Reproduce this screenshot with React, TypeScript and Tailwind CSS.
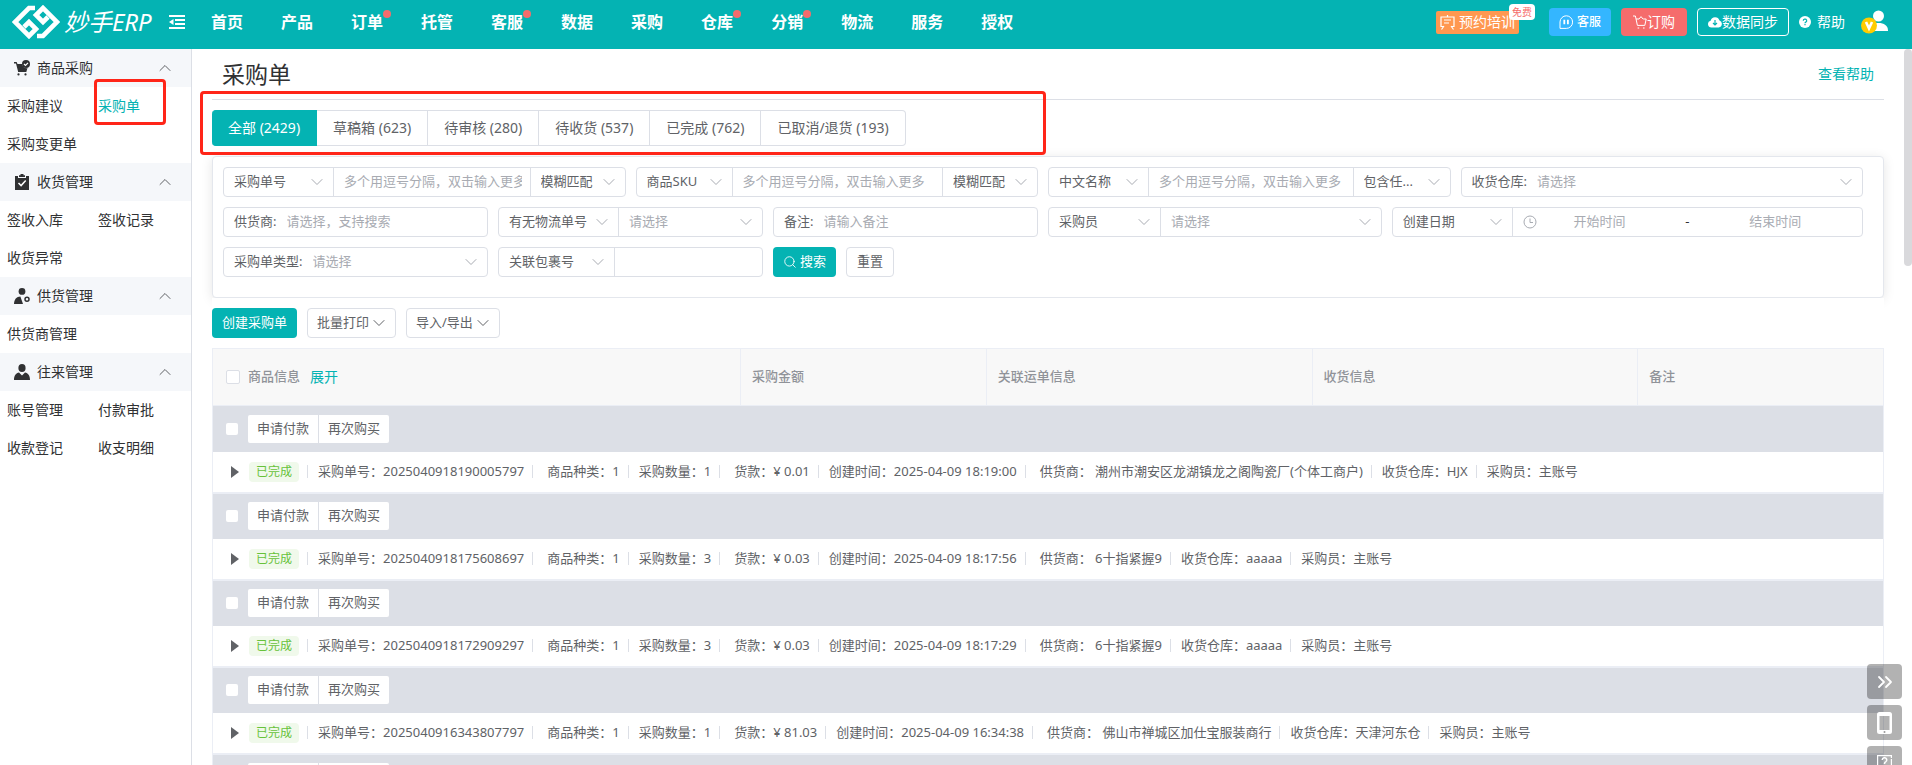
import type { ReactNode } from "react";
import { useState } from "react";
import { ChevronDown, ChevronsRight, ChevronUp, Search } from "lucide-react";
import clsx from "clsx";

type Order = {
  id: string;
  kinds: number;
  quantity: number;
  amount: string;
  createdAt: string;
  supplier: string;
  warehouse: string;
  buyer: string;
};

const navItems = [
  { label: "首页" },
  { label: "产品" },
  { label: "订单", dot: true },
  { label: "托管" },
  { label: "客服", dot: true },
  { label: "数据" },
  { label: "采购" },
  { label: "仓库", dot: true },
  { label: "分销", dot: true },
  { label: "物流" },
  { label: "服务" },
  { label: "授权" },
];

const menuGroups = [
  { title: "商品采购", icon: <CartIcon />, items: ["采购建议", "采购单", "采购变更单"] },
  { title: "收货管理", icon: <ClipboardIcon />, items: ["签收入库", "签收记录", "收货异常"] },
  { title: "供货管理", icon: <SupplierIcon />, items: ["供货商管理"] },
  { title: "往来管理", icon: <PersonIcon />, items: ["账号管理", "付款审批", "收款登记", "收支明细"] },
];

const tabs = [
  { label: "全部", count: 2429 },
  { label: "草稿箱", count: 623 },
  { label: "待审核", count: 280 },
  { label: "待收货", count: 537 },
  { label: "已完成", count: 762 },
  { label: "已取消/退货", count: 193 },
];

const orders: Order[] = [
  {
    id: "2025040918190005797",
    kinds: 1,
    quantity: 1,
    amount: "0.01",
    createdAt: "2025-04-09 18:19:00",
    supplier: "潮州市潮安区龙湖镇龙之阁陶瓷厂(个体工商户)",
    warehouse: "HJX",
    buyer: "主账号",
  },
  {
    id: "2025040918175608697",
    kinds: 1,
    quantity: 3,
    amount: "0.03",
    createdAt: "2025-04-09 18:17:56",
    supplier: "6十指紧握9",
    warehouse: "aaaaa",
    buyer: "主账号",
  },
  {
    id: "2025040918172909297",
    kinds: 1,
    quantity: 3,
    amount: "0.03",
    createdAt: "2025-04-09 18:17:29",
    supplier: "6十指紧握9",
    warehouse: "aaaaa",
    buyer: "主账号",
  },
  {
    id: "2025040916343807797",
    kinds: 1,
    quantity: 1,
    amount: "81.03",
    createdAt: "2025-04-09 16:34:38",
    supplier: "佛山市禅城区加仕宝服装商行",
    warehouse: "天津河东仓",
    buyer: "主账号",
  },
  {
    id: "2025040916320107797",
    kinds: 1,
    quantity: 1,
    amount: "81.03",
    createdAt: "2025-04-09 16:32:01",
    supplier: "佛山市禅城区加仕宝服装商行",
    warehouse: "天津河东仓",
    buyer: "主账号",
  },
];

function CartIcon() {
  return (
    <svg viewBox="0 0 16 16" className="h-4 w-4">
      <path d="M0 2h2.6l.9 2H8a4.5 4.5 0 0 0 5.5 4l-1.2 4H4.2L2 3.4H0z" fill="#303133" />
      <circle cx="12" cy="4" r="4" fill="#303133" />
      <path d="M10 4l1.5 1.5L14 2.8" fill="none" stroke="#fff" strokeWidth="1.2" />
      <circle cx="4.5" cy="14.4" r="1.1" fill="#303133" />
      <circle cx="11.5" cy="14.4" r="1.1" fill="#303133" />
    </svg>
  );
}

function ClipboardIcon() {
  return (
    <svg viewBox="0 0 16 16" className="h-4 w-4">
      <path d="M1 2h3v2h8V2h3v14H1z" fill="#303133" />
      <path d="M5 1.2h1.5V0h3v1.2H11V3H5z" fill="#303133" />
      <path d="M4.5 9l2.6 2.6 4.6-5" fill="none" stroke="#fff" strokeWidth="1.5" />
    </svg>
  );
}

function SupplierIcon() {
  return (
    <svg viewBox="0 0 16 16" className="h-4 w-4">
      <circle cx="8" cy="3.4" r="3.4" fill="#303133" />
      <path d="M0 16c0-4.5 2.6-7.6 6.4-7.6L9 16z" fill="#303133" />
      <circle cx="13" cy="11.2" r="2" fill="none" stroke="#303133" strokeWidth="1.5" />
    </svg>
  );
}

function PersonIcon() {
  return (
    <svg viewBox="0 0 16 16" className="h-4 w-4">
      <ellipse cx="8" cy="4" rx="3.6" ry="4" fill="#303133" />
      <path d="M0 16c0-4.6 2-6.8 5-7.4l3 3 3-3c3 .6 5 2.8 5 7.4z" fill="#303133" />
    </svg>
  );
}

function Logo() {
  return (
    <a href="#" className="flex items-center gap-1" aria-label="妙手ERP">
      <svg viewBox="12 5 48 34" className="h-[34px] w-12" fill="none" stroke="#fff" strokeWidth="4.6">
        <path d="M35 8h-6L15 22l14 14 7-7-7-7-5 5" />
        <path d="M37 36h6l14-14L43 8l-7 7 7 7 5-5" />
      </svg>
      <span className="text-2xl leading-8 text-white italic">妙手ERP</span>
    </a>
  );
}

function Header() {
  return (
    <header className="flex h-[49px] shrink-0 items-center bg-[#04b3b3] pr-6 pb-[5px] pl-3 text-white">
      <div className="flex w-[199px] items-center justify-between pr-[26px]">
        <Logo />
        <button type="button" aria-label="收起菜单">
          <svg viewBox="0 0 16 14" className="h-3.5 w-4" fill="none" stroke="#fff" strokeWidth="1.8">
            <path d="M0 1h16M6 5h10M6 9h10M0 13h16" />
            <path d="M4.5 4v6L0 7z" fill="#fff" stroke="none" />
          </svg>
        </button>
      </div>
      <nav className="flex flex-1 gap-[38px] text-base font-bold">
        {navItems.map((item) => (
          <a key={item.label} href="#" className="relative">
            {item.label}
            {item.dot && (
              <span className="absolute top-0 -right-2 h-2 w-2 rounded-full bg-[#f56c6c]" />
            )}
          </a>
        ))}
      </nav>
      <div className="flex items-center text-sm">
        <button
          type="button"
          className="relative mr-[30px] flex h-[23px] w-[83px] items-center gap-1 rounded-xs bg-[#ff9850] pl-1"
        >
          <svg viewBox="0 0 15 15" className="h-[15px] w-[15px] shrink-0" fill="none" stroke="#fff" strokeWidth="1.2">
            <path d="M3.5 11.500H1V2h13v9.500h-2.500M4 5h7M4 8h5M4 11L1.500 14.500M11 11l2.500 3.500M7.500 0v2" />
          </svg>
          <span className="whitespace-nowrap">预约培训</span>
          <span className="absolute -top-[7px] -right-4 rounded-sm bg-white px-[3px] text-[10px] leading-4 text-[#f56c6c]">
            免费
          </span>
        </button>
        <button
          type="button"
          className="mr-2.5 flex h-7 items-center gap-1 rounded-sm bg-[#34b6ff] px-2.5 text-xs font-medium"
        >
          <svg viewBox="0 0 14 14" className="h-3.5 w-3.5" fill="none" stroke="#fff">
            <path d="M1 13.400V7a6.300 6.300 0 1 1 6.300 6.400z" />
            <path d="M5.300 4.800v4.400M8.900 4.800v4.400" strokeWidth="1.800" />
          </svg>
          客服
        </button>
        <button type="button" className="mr-2.5 flex h-7 items-center rounded-sm bg-[#f56c6c] px-3">
          <svg viewBox="0 0 14 14" className="h-3.5 w-3.5" fill="none" stroke="#fff">
            <path d="M0 1h2.4l2 9.4h7.4L13.2 4h-3M6 4H3M6 4l2-2.4L10 4" />
            <path d="M4.6 12.4h1.6v1.2H4.6zM10 12.4h1.6v1.2H10z" fill="#fff" stroke="none" />
          </svg>
          订购
        </button>
        <button type="button" className="flex h-7 items-center rounded-sm border border-white px-2.5">
          <svg viewBox="0 0 14 14" className="h-3.5 w-3.5">
            <path d="M3.4 12.4A3.4 3.4 0 0 1 2.6 5.7 4.6 4.6 0 0 1 11.5 5.6a3.5 3.5 0 0 1-.8 6.8z" fill="#fff" />
            <path d="M7 5v5M5 8l2 2 2-2" fill="none" stroke="#04b3b3" strokeWidth="1.2" />
          </svg>
          数据同步
        </button>
        <a href="#" className="ml-2.5 flex items-center gap-1.5">
          <svg viewBox="0 0 12 12" className="h-3 w-3">
            <circle cx="6" cy="6" r="6" fill="#fff" />
            <path d="M4.3 4.8a1.7 1.6 0 1 1 2.5 1.3q-.8.4-.8 1.1M6 8v1.2" fill="none" stroke="#04b3b3" strokeWidth="1.2" />
          </svg>
          帮助
        </a>
        <button type="button" className="ml-4" aria-label="账号">
          <svg viewBox="0 0 27 24" className="h-6 w-[27px]">
            <circle cx="17.5" cy="6" r="5.5" fill="#fff" />
            <path d="M9 21c0-6 3-8 8.500-8s9.500 2.500 9.500 7.500v.5z" fill="#fff" />
            <circle cx="8" cy="15.5" r="8" fill="#fc0" />
            <path d="M5 12l3 6.500 3-6.500" fill="none" stroke="#fff" strokeWidth="2.6" />
          </svg>
        </button>
      </div>
    </header>
  );
}

function Sidebar() {
  return (
    <aside className="relative w-48 shrink-0 border-r border-[#dcdfe6] text-sm text-[#303133]">
      {menuGroups.map((group) => (
        <section key={group.title}>
          <button
            type="button"
            className="flex h-[38px] w-full items-center bg-[#f5f7fa] pr-4 pl-3.5"
          >
            {group.icon}
            <span className="ml-[7px] flex-1 text-left">{group.title}</span>
            <ChevronUp className="h-5 w-5 text-[#606266]" strokeWidth={1.2} />
          </button>
          <ul className="flex flex-wrap pl-[7px]">
            {group.items.map((item) => (
              <li key={item} className="flex h-[38px] w-[91px] items-center">
                <a href="#" className={clsx(item === "采购单" && "text-[#04b3b3]")}>
                  {item}
                </a>
              </li>
            ))}
          </ul>
        </section>
      ))}
      <div className="pointer-events-none absolute top-[30px] left-[94px] h-[46px] w-[72px] rounded-sm border-[3px] border-[#ff2518]" />
    </aside>
  );
}

function Field({ label, className, children }: { label?: string; className: string; children: ReactNode }) {
  const Tag = label ? "label" : "div";
  return (
    <Tag
      className={clsx(
        "flex h-[30px] min-w-0 items-stretch rounded-sm border border-[#dcdfe6] bg-white",
        !label && "divide-x divide-[#dcdfe6]",
        className,
      )}
    >
      {label && <span className="flex shrink-0 items-center pl-2.5">{label}:</span>}
      {children}
    </Tag>
  );
}

function Select({ name, value, muted, className }: { name: string; value: string; muted?: boolean; className: string }) {
  return (
    <div className={clsx("relative min-w-0", className)}>
      <select
        aria-label={name}
        className={clsx(
          "h-full w-full appearance-none bg-transparent pr-6 pl-2.5 outline-none",
          muted && "text-[#a8abb2]",
        )}
      >
        <option>{value}</option>
      </select>
      <ChevronDown
        className="pointer-events-none absolute inset-y-0 right-1.5 my-auto h-5 w-5 text-[#a8abb2]"
        strokeWidth={1.2}
      />
    </div>
  );
}

function TextInput({ name, placeholder }: { name: string; placeholder?: string }) {
  return (
    <div className="flex min-w-0 flex-1 pr-2 pl-2.5">
      <input
        type="text"
        aria-label={name}
        placeholder={placeholder}
        className="w-full min-w-0 bg-transparent outline-none placeholder:text-[#a8abb2]"
      />
    </div>
  );
}

const multiHint = "多个用逗号分隔，双击输入更多";

function FilterPanel() {
  return (
    <form
      onSubmit={(e) => e.preventDefault()}
      className="mt-2.5 grid grid-cols-24 gap-2.5 rounded-sm border border-[#e4e7ed] bg-white pt-2.5 pr-5 pb-5 pl-2.5 text-[13px] shadow-[0_2px_12px_0_rgba(0,0,0,0.1)]"
    >
      <Field className="col-span-6">
        <Select name="单号类型" value="采购单号" className="w-[110px]" />
        <TextInput name="单号" placeholder={multiHint} />
        <Select name="单号匹配" value="模糊匹配" className="w-[94px]" />
      </Field>
      <Field className="col-span-6">
        <Select name="商品字段" value="商品SKU" className="w-24" />
        <TextInput name="商品" placeholder={multiHint} />
        <Select name="商品匹配" value="模糊匹配" className="w-[94px]" />
      </Field>
      <Field className="col-span-6">
        <Select name="名称字段" value="中文名称" className="w-25" />
        <TextInput name="名称" placeholder={multiHint} />
        <Select name="名称匹配" value="包含任..." className="w-24" />
      </Field>
      <Field label="收货仓库" className="col-span-6">
        <Select name="收货仓库" value="请选择" muted className="flex-1" />
      </Field>

      <Field label="供货商" className="col-span-4">
        <TextInput name="供货商" placeholder="请选择，支持搜索" />
      </Field>
      <Field className="col-span-4">
        <Select name="物流条件" value="有无物流单号" className="w-30" />
        <Select name="物流单号" value="请选择" muted className="flex-1" />
      </Field>
      <Field label="备注" className="col-span-4">
        <TextInput name="备注" placeholder="请输入备注" />
      </Field>
      <Field className="col-span-5">
        <Select name="人员类型" value="采购员" className="w-28" />
        <Select name="人员" value="请选择" muted className="flex-1" />
      </Field>
      <Field className="col-span-7">
        <Select name="日期类型" value="创建日期" className="w-30" />
        <div className="flex min-w-0 flex-1 items-center pr-7 pl-2.5">
          <svg viewBox="0 0 14 14" className="h-3.5 w-3.5 shrink-0" fill="none" stroke="#a8abb2">
            <circle cx="7" cy="7" r="6" />
            <path d="M7 3.500V7.500h3" />
          </svg>
          <input
            aria-label="开始时间"
            placeholder="开始时间"
            className="ml-1 w-2/5 min-w-0 text-center outline-none placeholder:text-[#a8abb2]"
          />
          <span className="w-1/5 text-center text-[#303133]">-</span>
          <input
            aria-label="结束时间"
            placeholder="结束时间"
            className="w-2/5 min-w-0 text-center outline-none placeholder:text-[#a8abb2]"
          />
        </div>
      </Field>

      <Field label="采购单类型" className="col-span-4">
        <Select name="采购单类型" value="请选择" muted className="flex-1" />
      </Field>
      <Field className="col-span-4">
        <Select name="包裹字段" value="关联包裹号" className="w-29" />
        <TextInput name="包裹号" />
      </Field>
      <div className="col-span-4 flex gap-2.5">
        <button type="submit" className="flex h-[30px] items-center gap-[3px] rounded-sm bg-[#04b3b3] px-2.5 text-white">
          <Search className="h-3.5 w-3.5" strokeWidth={1.5} />
          搜索
        </button>
        <button type="reset" className="h-[30px] rounded-sm border border-[#dcdfe6] px-2.5">
          重置
        </button>
      </div>
    </form>
  );
}

function Toolbar() {
  return (
    <div className="relative flex gap-2.5 bg-white py-2.5 text-[13px]">
      <button type="button" className="h-[30px] rounded-sm bg-[#04b3b3] px-2.5 text-white">
        创建采购单
      </button>
      {["批量打印", "导入/导出"].map((label) => (
        <button
          key={label}
          type="button"
          className="flex h-[30px] items-center rounded-sm border border-[#dcdfe6] pr-1.5 pl-[9px]"
        >
          {label}
          <ChevronDown className="h-5 w-5" strokeWidth={1.2} />
        </button>
      ))}
    </div>
  );
}

function OrderRows({ order }: { order: Order }) {
  // The wide cells carry extra padding on the left
  const cells = [
    { text: `采购单号：${order.id}` },
    { text: `商品种类：${order.kinds}`, wide: true },
    { text: `采购数量：${order.quantity}` },
    { text: `货款：¥ ${order.amount}`, wide: true },
    { text: `创建时间：${order.createdAt}` },
    { text: `供货商： ${order.supplier}`, wide: true },
    { text: `收货仓库：${order.warehouse}` },
    { text: `采购员：${order.buyer}` },
  ];

  return (
    <>
      <tr className="bg-[#dcdfe6]">
        <td colSpan={5} className="h-[46px] p-0">
          <div className="flex items-center pl-[13px]">
            <input
              type="checkbox"
              aria-label={`选择 ${order.id}`}
              className="h-3 w-3 appearance-none rounded-xs bg-white"
            />
            <div className="ml-2.5 flex divide-x divide-[#dcdfe6] overflow-hidden rounded-xs bg-white">
              <button type="button" className="h-7 px-[9px]">
                申请付款
              </button>
              <button type="button" className="h-7 px-[9px]">
                再次购买
              </button>
            </div>
          </div>
        </td>
      </tr>
      <tr className="border-b-2 border-[#ebeef5]">
        <td colSpan={5} className="h-[41px] p-0">
          <div className="flex items-center pl-[18px] whitespace-nowrap">
            <button type="button" aria-label="展开">
              <svg viewBox="0 0 8 12" className="h-3 w-2">
                <path d="M0 0l8 6-8 6z" fill="#606266" />
              </svg>
            </button>
            <span className="ml-2.5 rounded-sm bg-[#f0f9eb] px-[7px] text-xs leading-5 text-[#67c23a]">已完成</span>
            {cells.map((cell) => (
              <div key={cell.text} className="flex items-center">
                <span className="ml-2 h-[13px] w-px bg-[#dcdfe6]" />
                <span className={cell.wide ? "pl-3.5" : "pl-2.5"}>{cell.text}</span>
              </div>
            ))}
          </div>
        </td>
      </tr>
    </>
  );
}

function OrderTable() {
  return (
    <table className="w-full table-fixed border-x border-t border-[#ebeef5] text-[13px]">
      <thead>
        <tr className="h-[57px] border-b border-[#ebeef5] bg-[#f8f8f8] text-left text-[#909399]">
          <th className="w-[31.6%] p-0 font-medium">
            <div className="flex items-center pl-[13px]">
              <input
                type="checkbox"
                aria-label="全选"
                className="h-3.5 w-3.5 appearance-none rounded-xs border border-[#dcdfe6] bg-white"
              />
              <span className="ml-2">商品信息</span>
              <button type="button" className="ml-2.5 text-sm font-normal text-[#04b3b3]">
                展开
              </button>
            </div>
          </th>
          <th className="w-[14.7%] border-l border-[#ebeef5] p-0 pl-[11px] font-medium">采购金额</th>
          <th className="w-[19.5%] border-l border-[#ebeef5] p-0 pl-[11px] font-medium">关联运单信息</th>
          <th className="w-[19.5%] border-l border-[#ebeef5] p-0 pl-[11px] font-medium">收货信息</th>
          <th className="w-[14.7%] border-l border-[#ebeef5] p-0 pl-[11px] font-medium">备注</th>
        </tr>
      </thead>
      <tbody>
        {orders.map((order) => (
          <OrderRows key={order.id} order={order} />
        ))}
      </tbody>
    </table>
  );
}

function FloatingTools() {
  return (
    <div className="absolute right-2.5 -bottom-4 flex flex-col gap-1.5">
      <button
        type="button"
        aria-label="收起"
        className="flex h-[35px] w-[35px] items-center justify-center rounded-sm bg-black/30 text-white"
      >
        <ChevronsRight className="h-6 w-6" strokeWidth={1.8} />
      </button>
      <button
        type="button"
        aria-label="手机版"
        className="flex h-[35px] w-[35px] items-center justify-center rounded-sm bg-black/30"
      >
        <svg viewBox="0 0 15 22" className="h-[22px] w-[15px]">
          <path d="M2.500 0h10A2.500 2.500 0 0 1 15 2.500v17a2.500 2.500 0 0 1-2.500 2.500h-10A2.500 2.500 0 0 1 0 19.500v-17A2.500 2.500 0 0 1 2.500 0zM2.500 4v14h10V4z" fill="#fff" fillRule="evenodd" />
          <circle cx="7.5" cy="20" r="1" fill="#999" />
        </svg>
      </button>
      <button
        type="button"
        aria-label="反馈"
        className="flex h-[35px] w-[35px] justify-center rounded-sm bg-black/30 pt-[9px]"
      >
        <svg viewBox="0 0 15 15" className="h-[15px] w-[15px]" fill="none" stroke="#fff" strokeWidth="1.2">
          <path d="M12 .6H.6v13.800h13.800V4M12 .6h2.400V3" />
          <path d="M5.300 5a2.200 2.200 0 1 1 3.300 1.800Q7.500 7.400 7.500 9M7.500 10.500V12" strokeWidth="1.5" />
        </svg>
      </button>
    </div>
  );
}

export default function App() {
  const [activeTab, setActiveTab] = useState("全部");

  return (
    <div className="relative flex h-screen flex-col overflow-hidden bg-white font-['Noto_Sans','Noto_Sans_CJK_SC',sans-serif] text-[#606266]">
      <Header />
      <div className="flex min-h-0 flex-1">
        <Sidebar />
        <main className="relative min-w-0 flex-1 overflow-hidden pr-7 pl-5">
          <div className="flex h-[51px] items-center justify-between border-b border-[#dcdfe6] px-2.5">
            <h1 className="text-[23px] text-[#303133]">采购单</h1>
            <a href="#" className="text-sm text-[#04b3b3]">
              查看帮助
            </a>
          </div>

          <div className="mt-2.5 flex text-sm">
            {tabs.map((tab) => (
              <button
                key={tab.label}
                type="button"
                onClick={() => setActiveTab(tab.label)}
                className={clsx(
                  "h-9 border-y border-r px-4 first:rounded-l-sm last:rounded-r-sm",
                  tab.label === activeTab
                    ? "border-[#04b3b3] bg-[#04b3b3] text-white"
                    : "border-[#dcdfe6] bg-white",
                )}
              >
                {tab.label} ({tab.count})
              </button>
            ))}
          </div>

          <FilterPanel />
          <Toolbar />
          <OrderTable />

          <div className="pointer-events-none absolute top-[42px] left-2 h-16 w-[846px] rounded-sm border-[3px] border-[#ff2518]" />
          <div className="absolute top-0 right-0 h-[217px] w-2 rounded-full bg-[#d9d9dc]" />
        </main>
      </div>
      <FloatingTools />
    </div>
  );
}
